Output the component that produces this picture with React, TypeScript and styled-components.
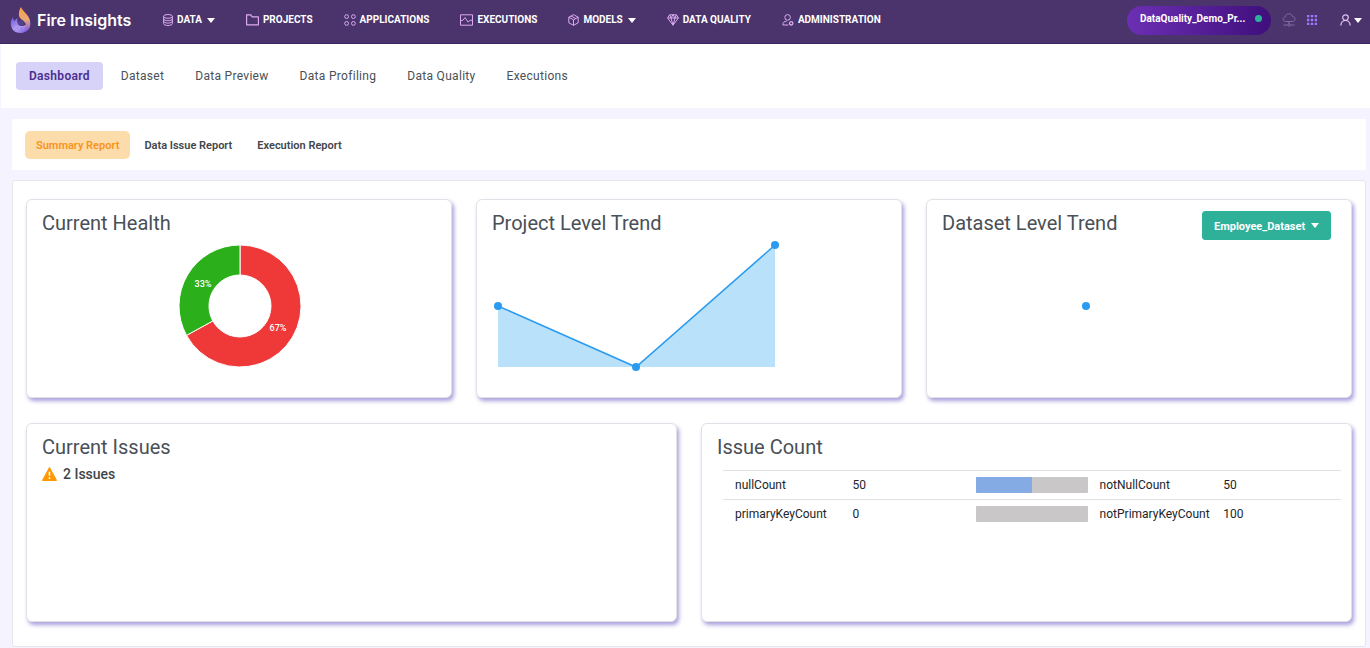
import React from "react";
import styled, { createGlobalStyle } from "styled-components";

const GlobalStyle = createGlobalStyle`
  *, *::before, *::after { box-sizing: border-box; }
  body {
    margin: 0;
    background: #f5f3ff;
    font-family: Roboto, "Liberation Sans", sans-serif;
    color: #495057;
  }
  button, select { font-family: inherit; }
`;

const Header = styled.header`
  display: flex;
  align-items: center;
  height: 44px;
  padding: 0 8px 3px 10px;
  background: #4a346b;
  border-bottom: 1px solid #3b2560;
`;

const Brand = styled.a`
  display: flex;
  align-items: center;
  gap: 6px;
  width: 153px;
  color: #fff;
  font: 600 16px/24px Inter, sans-serif;
  white-space: nowrap;
  text-decoration: none;
`;

const MainNav = styled.nav`
  display: flex;
  align-items: center;
  gap: 31px;
  flex: 1;
`;

const NavLink = styled.a`
  display: flex;
  align-items: center;
  gap: 4px;
  color: #fff;
  font-size: 10px;
  font-weight: 700;
  line-height: 16px;
  white-space: nowrap;
  text-decoration: none;
  svg { flex: none; color: #dcaaf2; }
`;

const Caret = styled.span`
  width: 0;
  height: 0;
  margin-left: 1px;
  border: 4px solid transparent;
  border-top: 5px solid currentColor;
  border-bottom: 0;
`;

const HeaderTools = styled.div`
  display: flex;
  align-items: center;
  gap: 11px;
`;

const ProjectPill = styled.button`
  display: flex;
  align-items: center;
  justify-content: space-between;
  width: 144px;
  height: 29px;
  padding: 0 9px 3px 13px;
  border: 0;
  border-radius: 15px;
  background: linear-gradient(90deg, #6c2fb4, #3f0f7c);
  color: #fff;
  font-size: 10px;
  font-weight: 700;
  white-space: nowrap;
`;

const StatusDot = styled.span`
  width: 7px;
  height: 7px;
  border-radius: 50%;
  background: #2bb39a;
`;

const IconButton = styled.button<{ $color: string }>`
  display: flex;
  align-items: center;
  padding: 0;
  border: 0;
  background: none;
  color: ${(p) => p.$color};
`;

const UserButton = styled(IconButton)`
  margin-left: 12px;
  ${Caret} { margin-left: 3px; color: #fff; }
`;

const PageTabs = styled.nav`
  display: flex;
  align-items: flex-start;
  gap: 5px;
  height: 64px;
  margin-left: 1px;
  padding: 18px 15px;
  background: #fff;
`;

const PageTab = styled.button<{ $active?: boolean }>`
  height: 28px;
  padding: 0 13px;
  border: 0;
  border-radius: 4px;
  background: ${(p) => (p.$active ? "#d7d2f7" : "transparent")};
  color: ${(p) => (p.$active ? "#4a2d8f" : "#495057")};
  font-size: 12px;
  font-weight: ${(p) => (p.$active ? 600 : 400)};
  letter-spacing: 0.3px;
  white-space: nowrap;
`;

const Content = styled.main`
  display: flex;
  flex-direction: column;
  gap: 10px;
  padding: 11px 4px 1px 12px;
`;

const ReportTabs = styled.nav`
  display: flex;
  gap: 3px;
  padding: 12px 13px 11px;
  background: #fff;
`;

const ReportTab = styled.button<{ $active?: boolean }>`
  height: 28px;
  padding: 0 11px;
  border: 0;
  border-radius: 5px;
  background: ${(p) => (p.$active ? "#fddcab" : "transparent")};
  color: ${(p) => (p.$active ? "#f7941d" : "#3f464d")};
  font-size: 11px;
  font-weight: 600;
  white-space: nowrap;
`;

const Panel = styled.section`
  display: flex;
  flex-direction: column;
  gap: 25px;
  padding: 18px 13px 24px 13px;
  border: 1px solid #e6e6ea;
  border-radius: 3px;
  background: #fff;
`;

const CardRow = styled.div<{ $columns: number }>`
  display: grid;
  grid-template-columns: repeat(${(p) => p.$columns}, minmax(0, 1fr));
  gap: 24px;
`;

const Card = styled.article`
  min-height: 199px;
  padding: 11px 10px 11px 15px;
  border: 1px solid #e2e2e6;
  border-radius: 6px;
  background: #fff;
  box-shadow: 2px 3px 4px #a9a0dc;
`;

const CardHead = styled.div`
  display: flex;
  align-items: flex-start;
  justify-content: space-between;
  min-height: 29px;
  padding-right: 10px;
`;

const CardTitle = styled.h2`
  margin: 0;
  color: #495057;
  font-size: 20px;
  font-weight: 400;
  line-height: 24px;
`;

const DonutArea = styled.div`
  display: flex;
  justify-content: center;
  padding-right: 4px;
`;

const ChartSvg = styled.svg`
  display: block;
`;

const SliceLabel = styled.text`
  fill: #fff;
  font-size: 9px;
  font-weight: 500;
  text-anchor: middle;
`;

const SelectBox = styled.label`
  position: relative;
  display: block;
  color: #fff;
  ${Caret} {
    position: absolute;
    top: 12px;
    right: 12px;
    pointer-events: none;
  }
`;

const DatasetSelect = styled.select`
  appearance: none;
  display: block;
  width: 129px;
  height: 29px;
  padding: 1px 22px 0 11px;
  border: 1px solid #2bb39a;
  border-radius: 3px;
  background: #2fb199;
  color: #fff;
  font-size: 11px;
  font-weight: 700;
`;

const IssueLine = styled.p`
  display: flex;
  align-items: center;
  gap: 6px;
  margin: 0;
  color: #3f464d;
  font-size: 14px;
  font-weight: 500;
  line-height: 20px;
`;

const CountTable = styled.table`
  width: calc(100% - 6px);
  margin: 6px 0 0 6px;
  border-collapse: collapse;
  table-layout: fixed;
  color: #212529;
  font-size: 12px;
  line-height: 16px;
`;

const CountCell = styled.td<{ $width: number }>`
  width: ${(p) => p.$width}%;
  height: 29px;
  padding: 0 0 0 12px;
  border-top: 1px solid #dee2e6;
  white-space: nowrap;
`;

const Meter = styled.div`
  height: 16px;
  overflow: hidden;
  border-radius: 1px;
  background: #c9c7c8;
`;

const MeterFill = styled.div`
  height: 100%;
  background: #84abe3;
`;

const strokeProps = { fill: "none", stroke: "currentColor", strokeWidth: 1, "aria-hidden": true } as const;

const Logo = () => (
  <svg width="21" height="27" viewBox="0 0 21 27" aria-hidden="true">
    <defs>
      <linearGradient id="flame" x1="0" y1="0" x2="0" y2="1">
        <stop offset="0" stopColor="#f9a03f" />
        <stop offset="0.5" stopColor="#e8a877" />
        <stop offset="1" stopColor="#7b55e0" />
      </linearGradient>
      <linearGradient id="swirl" x1="0" y1="0" x2="1" y2="1">
        <stop offset="0" stopColor="#5b48d8" />
        <stop offset="0.5" stopColor="#b9a4f2" />
        <stop offset="1" stopColor="#6a4be0" />
      </linearGradient>
    </defs>
    <path d="M3 10C0 13 0 19 3 23c3 4 11 4 15 0 3-3 3-8 1-11-1 5-4 7-7 7-4 0-6-4-4-8-2 1-3 2-3 3-1-1-2-2-2-4Z" fill="url(#swirl)" />
    <path d="M11 0c1 4 9 8 9 15 0 5-3 8-7 10 2-2 3-4 3-6 0-4-3-5-6-8C8 8 9 3 11 0Z" fill="url(#flame)" />
    <circle cx="11" cy="16" r="3" fill="#55408a" />
    <path d="m1 15 7 3M4 24l5-5M12 26l-1-6" stroke="#8d78e8" strokeWidth="0.8" fill="none" />
  </svg>
);

const DatabaseIcon = () => (
  <svg width="10" height="12" viewBox="0 0 10 12" {...strokeProps}>
    <ellipse cx="5" cy="2.4" rx="4.4" ry="1.9" />
    <path d="M.6 2.4v7.2c0 1 2 1.9 4.4 1.9s4.4-.9 4.4-1.9V2.4M.6 4.8c0 1 2 1.9 4.4 1.9s4.4-.9 4.4-1.9M.6 7.2c0 1 2 1.9 4.4 1.9s4.4-.9 4.4-1.9" />
  </svg>
);

const FolderIcon = () => (
  <svg width="13" height="12" viewBox="0 0 13 12" {...strokeProps}>
    <path d="M.6 10.8V.9h4.2l1.4 1.9h6.2v8Z" strokeWidth="1.2" strokeLinejoin="round" />
  </svg>
);

const AppsIcon = () => (
  <svg width="12" height="12" viewBox="0 0 12 12" {...strokeProps}>
    <circle cx="2.6" cy="2.6" r="1.9" />
    <circle cx="9.4" cy="2.6" r="1.9" />
    <circle cx="2.6" cy="9.4" r="1.9" />
    <circle cx="9.4" cy="9.4" r="1.9" />
  </svg>
);

const ExecutionsIcon = () => (
  <svg width="13" height="12" viewBox="0 0 13 12" {...strokeProps}>
    <path d="M.5.8h12v10.400H.5Z" />
    <path d="m1 6.600 1.800-.3L5 3.600l3.200 4.600 1.600-1.800 2.400-.2" />
  </svg>
);

const CubeIcon = () => (
  <svg width="11" height="12" viewBox="0 0 11 12" {...strokeProps}>
    <path d="m5.5.7 4.700 2.500v5.600l-4.700 2.500L.8 8.800V3.200Z M.8 3.200l4.700 2.700 4.700-2.700M5.500 5.900v5.400M3 2l4.800 2.600" strokeLinejoin="round" />
  </svg>
);

const DiamondIcon = () => (
  <svg width="12" height="12" viewBox="0 0 12 12" {...strokeProps}>
    <path d="M2.600.8h6.800l2 3.200L6 11.200.6 4Z M.6 4h10.800M2.600.8 4 4l2 7.200L8 4 9.400.8M4 4l2-3.200L8 4" strokeLinejoin="round" />
  </svg>
);

const AdminIcon = () => (
  <svg width="12" height="12" viewBox="0 0 12 12" {...strokeProps}>
    <circle cx="5.6" cy="3.4" r="2.8" />
    <path d="M6.400 11H.9C.7 8.600 2.200 7.200 4.800 7.100" />
    <circle cx="9.2" cy="9.3" r="1.7" strokeWidth="1.3" />
  </svg>
);

const CloudIcon = () => (
  <svg width="14" height="14" viewBox="0 0 14 14" {...strokeProps}>
    <path d="M3.800 8.500C.2 8.400.2 4.300 3.200 4.100 3.600-.1 9.800-.3 10.600 3.500c3.300.2 3.200 4.900-.2 5ZM7 8.500v2.500M1.500 12h4M8.500 12h4" />
    <circle cx="7" cy="12" r="1.2" />
  </svg>
);

const GridIcon = () => (
  <svg width="10" height="10" viewBox="0 0 10 10" fill="currentColor" aria-hidden="true">
    {[0, 4, 8].map((y) => [0, 4, 8].map((x) => <rect key={`${x}-${y}`} x={x} y={y} width="2" height="2" />))}
    <path d="M0 1h10M0 5h10M0 9h10M1 0v10M5 0v10M9 0v10" stroke="currentColor" strokeWidth="1" opacity="0.6" />
  </svg>
);

const UserIcon = () => (
  <svg width="11" height="12" viewBox="0 0 11 12" {...strokeProps} strokeWidth={1.2}>
    <circle cx="5.5" cy="3.6" r="2.8" />
    <path d="M.8 11.500c.3-3.200 2-5 4.700-5s4.400 1.800 4.700 5" />
  </svg>
);

const WarningIcon = () => (
  <svg width="15" height="14" viewBox="0 0 15 14" aria-hidden="true">
    <path d="M7.500.8 14.300 13.300H.7Z" fill="#ff9800" stroke="#ff9800" strokeWidth="1.2" strokeLinejoin="round" />
    <path d="M7.500 4.800v4M7.500 10.300v1.600" stroke="#fff" strokeWidth="1.6" />
  </svg>
);

const navItems = [
  { label: "DATA", Icon: DatabaseIcon, menu: true },
  { label: "PROJECTS", Icon: FolderIcon },
  { label: "APPLICATIONS", Icon: AppsIcon },
  { label: "EXECUTIONS", Icon: ExecutionsIcon },
  { label: "MODELS", Icon: CubeIcon, menu: true },
  { label: "DATA QUALITY", Icon: DiamondIcon },
  { label: "ADMINISTRATION", Icon: AdminIcon },
];

const pageTabs = ["Dashboard", "Dataset", "Data Preview", "Data Profiling", "Data Quality", "Executions"];
const reportTabs = ["Summary Report", "Data Issue Report", "Execution Report"];

const issueCounts = [
  { name: "nullCount", count: 50, inverse: "notNullCount", rest: 50 },
  { name: "primaryKeyCount", count: 0, inverse: "notPrimaryKeyCount", rest: 100 },
];

const HealthDonut = () => {
  const angle = 0.67 * 2 * Math.PI;
  const at = (r: number) => `${66 + r * Math.sin(angle)} ${66 - r * Math.cos(angle)}`;
  return (
    <ChartSvg width="132" height="132" viewBox="0 0 132 132" role="img" aria-label="Current health">
      <g stroke="#fff" strokeWidth="1">
        <path d={`M66 5A61 61 0 1 1 ${at(61)}L${at(31)}A31 31 0 1 0 66 35Z`} fill="#ef3838" />
        <path d={`M${at(61)}A61 61 0 0 1 66 5V35A31 31 0 0 0 ${at(31)}Z`} fill="#2bb01b" />
      </g>
      <SliceLabel x="104" y="91">67%</SliceLabel>
      <SliceLabel x="29" y="47">33%</SliceLabel>
    </ChartSvg>
  );
};

const TrendChart = ({ points, label }: { points: [number, number][]; label: string }) => {
  const line = points.map((p) => p.join(" ")).join("L");
  const first = points[0][0];
  const last = points[points.length - 1][0];
  return (
    <ChartSvg width="290" height="132" viewBox="0 0 290 132" role="img" aria-label={label}>
      {points.length > 1 && (
        <>
          <path d={`M${first} 127L${line}L${last} 127Z`} fill="#b9e1fa" />
          <path d={`M${line}`} fill="none" stroke="#2a9bf0" strokeWidth="1.5" />
        </>
      )}
      {points.map(([x, y]) => (
        <circle key={x} cx={x} cy={y} r="4" fill="#2a9bf0" />
      ))}
    </ChartSvg>
  );
};

export default function App() {
  return (
    <>
      <GlobalStyle />
      <Header>
        <Brand href="#home">
          <Logo />
          Fire Insights
        </Brand>
        <MainNav aria-label="Main">
          {navItems.map(({ label, Icon, menu }) => (
            <NavLink key={label} href={`#${label.toLowerCase().replace(" ", "-")}`}>
              <Icon />
              {label}
              {menu && <Caret />}
            </NavLink>
          ))}
        </MainNav>
        <HeaderTools>
          <ProjectPill type="button">
            DataQuality_Demo_Pr...
            <StatusDot />
          </ProjectPill>
          <IconButton type="button" $color="#806c9e" aria-label="Connections">
            <CloudIcon />
          </IconButton>
          <IconButton type="button" $color="#9a78ff" aria-label="Modules">
            <GridIcon />
          </IconButton>
          <UserButton type="button" $color="#e3c4f2" aria-label="Account">
            <UserIcon />
            <Caret />
          </UserButton>
        </HeaderTools>
      </Header>

      <PageTabs aria-label="Project">
        {pageTabs.map((tab, i) => (
          <PageTab key={tab} type="button" $active={i === 0}>
            {tab}
          </PageTab>
        ))}
      </PageTabs>

      <Content>
        <ReportTabs aria-label="Reports">
          {reportTabs.map((tab, i) => (
            <ReportTab key={tab} type="button" $active={i === 0}>
              {tab}
            </ReportTab>
          ))}
        </ReportTabs>

        <Panel>
          <CardRow $columns={3}>
            <Card>
              <CardHead>
                <CardTitle>Current Health</CardTitle>
              </CardHead>
              <DonutArea>
                <HealthDonut />
              </DonutArea>
            </Card>
            <Card>
              <CardHead>
                <CardTitle>Project Level Trend</CardTitle>
              </CardHead>
              <TrendChart label="Project level trend" points={[[6, 66], [144, 127], [283, 5]]} />
            </Card>
            <Card>
              <CardHead>
                <CardTitle>Dataset Level Trend</CardTitle>
                <SelectBox>
                  <DatasetSelect aria-label="Dataset" defaultValue="Employee_Dataset">
                    <option>Employee_Dataset</option>
                  </DatasetSelect>
                  <Caret />
                </SelectBox>
              </CardHead>
              <TrendChart label="Dataset level trend" points={[[144, 66]]} />
            </Card>
          </CardRow>
          <CardRow $columns={2}>
            <Card>
              <CardHead>
                <CardTitle>Current Issues</CardTitle>
              </CardHead>
              <IssueLine>
                <WarningIcon />2 Issues
              </IssueLine>
            </Card>
            <Card>
              <CardHead>
                <CardTitle>Issue Count</CardTitle>
              </CardHead>
              <CountTable>
                <tbody>
                  {issueCounts.map((row) => (
                    <tr key={row.name}>
                      <CountCell $width={19}>{row.name}</CountCell>
                      <CountCell $width={20}>{row.count}</CountCell>
                      <CountCell $width={20}>
                        <Meter>
                          <MeterFill style={{ width: `${row.count}%` }} />
                        </Meter>
                      </CountCell>
                      <CountCell $width={20}>{row.inverse}</CountCell>
                      <CountCell $width={21}>{row.rest}</CountCell>
                    </tr>
                  ))}
                </tbody>
              </CountTable>
            </Card>
          </CardRow>
        </Panel>
      </Content>
    </>
  );
}
